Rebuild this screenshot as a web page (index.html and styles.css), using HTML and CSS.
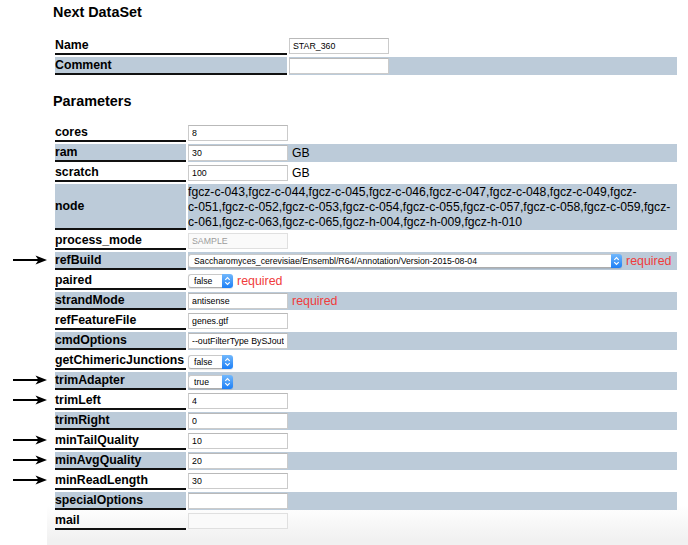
FILE: index.html
```html
<!DOCTYPE html>
<html>
<head>
<meta charset="utf-8">
<title>Next DataSet</title>
<link rel="stylesheet" href="styles.css">
</head>
<body>
<div class="page">
  <h3 class="heading">Next DataSet</h3>
  <table class="form form-dataset">
    <tr><td class="label">Name</td><td class="value"><input class="field" type="text" value="STAR_360"></td></tr>
    <tr><td class="label">Comment</td><td class="value"><input class="field" type="text" value=""></td></tr>
  </table>

  <h3 class="heading heading-params">Parameters</h3>
  <table class="form form-params">
    <tr><td class="label">cores</td><td class="value"><input class="field" type="text" value="8"></td></tr>
    <tr><td class="label">ram</td><td class="value"><input class="field" type="text" value="30"><span class="unit">GB</span></td></tr>
    <tr><td class="label">scratch</td><td class="value"><input class="field" type="text" value="100"><span class="unit">GB</span></td></tr>
    <tr><td class="label">node</td><td class="value value-text">fgcz-<span class="nb">c-043,</span>fgcz-<span class="nb">c-044,</span>fgcz-<span class="nb">c-045,</span>fgcz-<span class="nb">c-046,</span>fgcz-<span class="nb">c-047,</span>fgcz-<span class="nb">c-048,</span>fgcz-<span class="nb">c-049,</span>fgcz-<span class="nb">c-051,</span>fgcz-<span class="nb">c-052,</span>fgcz-<span class="nb">c-053,</span>fgcz-<span class="nb">c-054,</span>fgcz-<span class="nb">c-055,</span>fgcz-<span class="nb">c-057,</span>fgcz-<span class="nb">c-058,</span>fgcz-<span class="nb">c-059,</span>fgcz-<span class="nb">c-061,</span>fgcz-<span class="nb">c-063,</span>fgcz-<span class="nb">c-065,</span>fgcz-<span class="nb">h-004,</span>fgcz-<span class="nb">h-009,</span>fgcz-<span class="nb">h-010</span></td></tr>
    <tr><td class="label">process_mode</td><td class="value"><input class="field" type="text" value="SAMPLE" disabled></td></tr>
    <tr><td class="label"><svg class="arrow" viewBox="0 0 34 10"><path class="arrow-shaft" d="M0 5H27"/><path class="arrow-head" d="M34 5L22.5 0.5L25.5 5L22.5 9.5Z"/></svg>refBuild</td><td class="value"><span class="select select-wide"><select class="select-box"><option>Saccharomyces_cerevisiae/Ensembl/R64/Annotation/Version-2015-08-04</option></select><span class="select-btn"><svg viewBox="0 0 11 14"><path d="M3.3 5.8L5.5 3.6L7.7 5.8M3.3 8.2L5.5 10.4L7.7 8.2"/></svg></span></span><span class="required">required</span></td></tr>
    <tr><td class="label">paired</td><td class="value"><span class="select"><select class="select-box"><option>false</option></select><span class="select-btn"><svg viewBox="0 0 11 14"><path d="M3.3 5.8L5.5 3.6L7.7 5.8M3.3 8.2L5.5 10.4L7.7 8.2"/></svg></span></span><span class="required">required</span></td></tr>
    <tr><td class="label">strandMode</td><td class="value"><input class="field" type="text" value="antisense"><span class="required">required</span></td></tr>
    <tr><td class="label">refFeatureFile</td><td class="value"><input class="field" type="text" value="genes.gtf"></td></tr>
    <tr><td class="label">cmdOptions</td><td class="value"><input class="field" type="text" value="--outFilterType BySJout"></td></tr>
    <tr><td class="label">getChimericJunctions</td><td class="value"><span class="select"><select class="select-box"><option>false</option></select><span class="select-btn"><svg viewBox="0 0 11 14"><path d="M3.3 5.8L5.5 3.6L7.7 5.8M3.3 8.2L5.5 10.4L7.7 8.2"/></svg></span></span></td></tr>
    <tr><td class="label"><svg class="arrow" viewBox="0 0 34 10"><path class="arrow-shaft" d="M0 5H27"/><path class="arrow-head" d="M34 5L22.5 0.5L25.5 5L22.5 9.5Z"/></svg>trimAdapter</td><td class="value"><span class="select"><select class="select-box"><option>true</option></select><span class="select-btn"><svg viewBox="0 0 11 14"><path d="M3.3 5.8L5.5 3.6L7.7 5.8M3.3 8.2L5.5 10.4L7.7 8.2"/></svg></span></span></td></tr>
    <tr><td class="label"><svg class="arrow" viewBox="0 0 34 10"><path class="arrow-shaft" d="M0 5H27"/><path class="arrow-head" d="M34 5L22.5 0.5L25.5 5L22.5 9.5Z"/></svg>trimLeft</td><td class="value"><input class="field" type="text" value="4"></td></tr>
    <tr><td class="label">trimRight</td><td class="value"><input class="field" type="text" value="0"></td></tr>
    <tr><td class="label"><svg class="arrow" viewBox="0 0 34 10"><path class="arrow-shaft" d="M0 5H27"/><path class="arrow-head" d="M34 5L22.5 0.5L25.5 5L22.5 9.5Z"/></svg>minTailQuality</td><td class="value"><input class="field" type="text" value="10"></td></tr>
    <tr><td class="label"><svg class="arrow" viewBox="0 0 34 10"><path class="arrow-shaft" d="M0 5H27"/><path class="arrow-head" d="M34 5L22.5 0.5L25.5 5L22.5 9.5Z"/></svg>minAvgQuality</td><td class="value"><input class="field" type="text" value="20"></td></tr>
    <tr><td class="label"><svg class="arrow" viewBox="0 0 34 10"><path class="arrow-shaft" d="M0 5H27"/><path class="arrow-head" d="M34 5L22.5 0.5L25.5 5L22.5 9.5Z"/></svg>minReadLength</td><td class="value"><input class="field" type="text" value="30"></td></tr>
    <tr><td class="label">specialOptions</td><td class="value"><input class="field" type="text" value=""></td></tr>
    <tr><td class="label">mail</td><td class="value"><input class="field" type="text" value="" disabled></td></tr>
  </table>
</div>
</body>
</html>
```

FILE: styles.css
```css
* {
  box-sizing: border-box;
}

html,
body {
  margin: 0;
  padding: 0;
  background: #fff;
}

body {
  font-family: "Liberation Sans", Arial, Helvetica, sans-serif;
  color: #000;
}

.page {
  margin-left: 47px;
  padding: 4px 9px 0 6px;
  min-height: 545px;
  background: linear-gradient(to bottom, #fff 0, #fff 505px, #f1f1f1 540px, #f1f1f1 100%);
}

.heading {
  margin: 0;
  font-size: 14.4px;
  line-height: 17px;
  font-weight: bold;
}

.heading-params {
  margin-top: 16px;
}

.form {
  width: 100%;
  border-collapse: separate;
  border-spacing: 2px;
  table-layout: fixed;
}

.form-dataset {
  margin-top: 14px;
}

.form-params {
  margin-top: 12px;
}

.form tr:nth-child(even) td {
  background: #bccbd9;
}

.label {
  position: relative;
  padding: 0;
  font-size: 12.3px;
  font-weight: bold;
  line-height: 16px;
  white-space: nowrap;
  vertical-align: middle;
  border-bottom: 2px solid #111;
}

.form-dataset .label {
  width: 232px;
}

.form-params .label {
  width: 131px;
}

.value {
  padding: 0;
  font-size: 12.2px;
  line-height: 16px;
  vertical-align: middle;
}

.value-text {
  line-height: 15px;
  padding-top: 1px;
}

.nb {
  white-space: nowrap;
}

.field {
  width: 100px;
  height: 16px;
  margin: 0;
  padding: 0 3px;
  border: 1px solid #cbcbcb;
  border-top-color: #b9b9b9;
  border-radius: 0;
  background: #fff;
  font: 8.8px "Liberation Sans", Arial, sans-serif;
  color: #000;
  vertical-align: middle;
  outline: none;
}

.field:disabled {
  background: #fafafa;
  border-color: #e0e0e0;
  color: #9c9c9c;
}

.unit {
  margin-left: 4px;
  vertical-align: middle;
}

.required {
  margin-left: 4px;
  color: #f03c3c;
  font-size: 12.4px;
  vertical-align: middle;
}

.select {
  display: inline-flex;
  height: 14px;
  vertical-align: middle;
  border-radius: 3px;
  box-shadow: 0 1px 1px rgba(0, 0, 0, 0.12);
}

.select-box {
  -webkit-appearance: none;
  appearance: none;
  width: 34px;
  height: 14px;
  margin: 0;
  padding: 0 0 0 5px;
  border: 1px solid #c9c9c9;
  border-right: 0;
  border-bottom-color: #adadad;
  border-radius: 3px 0 0 3px;
  background: #fff;
  font: 8.7px "Liberation Sans", Arial, sans-serif;
  line-height: 12px;
  color: #000;
  outline: none;
}

.select-wide .select-box {
  width: 423px;
}

.select-btn {
  display: flex;
  width: 11px;
  height: 14px;
  border-radius: 0 3px 3px 0;
  background: linear-gradient(#72b8fc, #1c7ff6);
}

.select-btn svg {
  width: 11px;
  height: 14px;
  fill: none;
  stroke: #fff;
  stroke-width: 1.2;
}

.arrow {
  position: absolute;
  left: -42px;
  top: 3px;
  width: 34px;
  height: 10px;
}

.arrow-shaft {
  stroke: #000;
  stroke-width: 2;
}

.arrow-head {
  fill: #000;
}
```
